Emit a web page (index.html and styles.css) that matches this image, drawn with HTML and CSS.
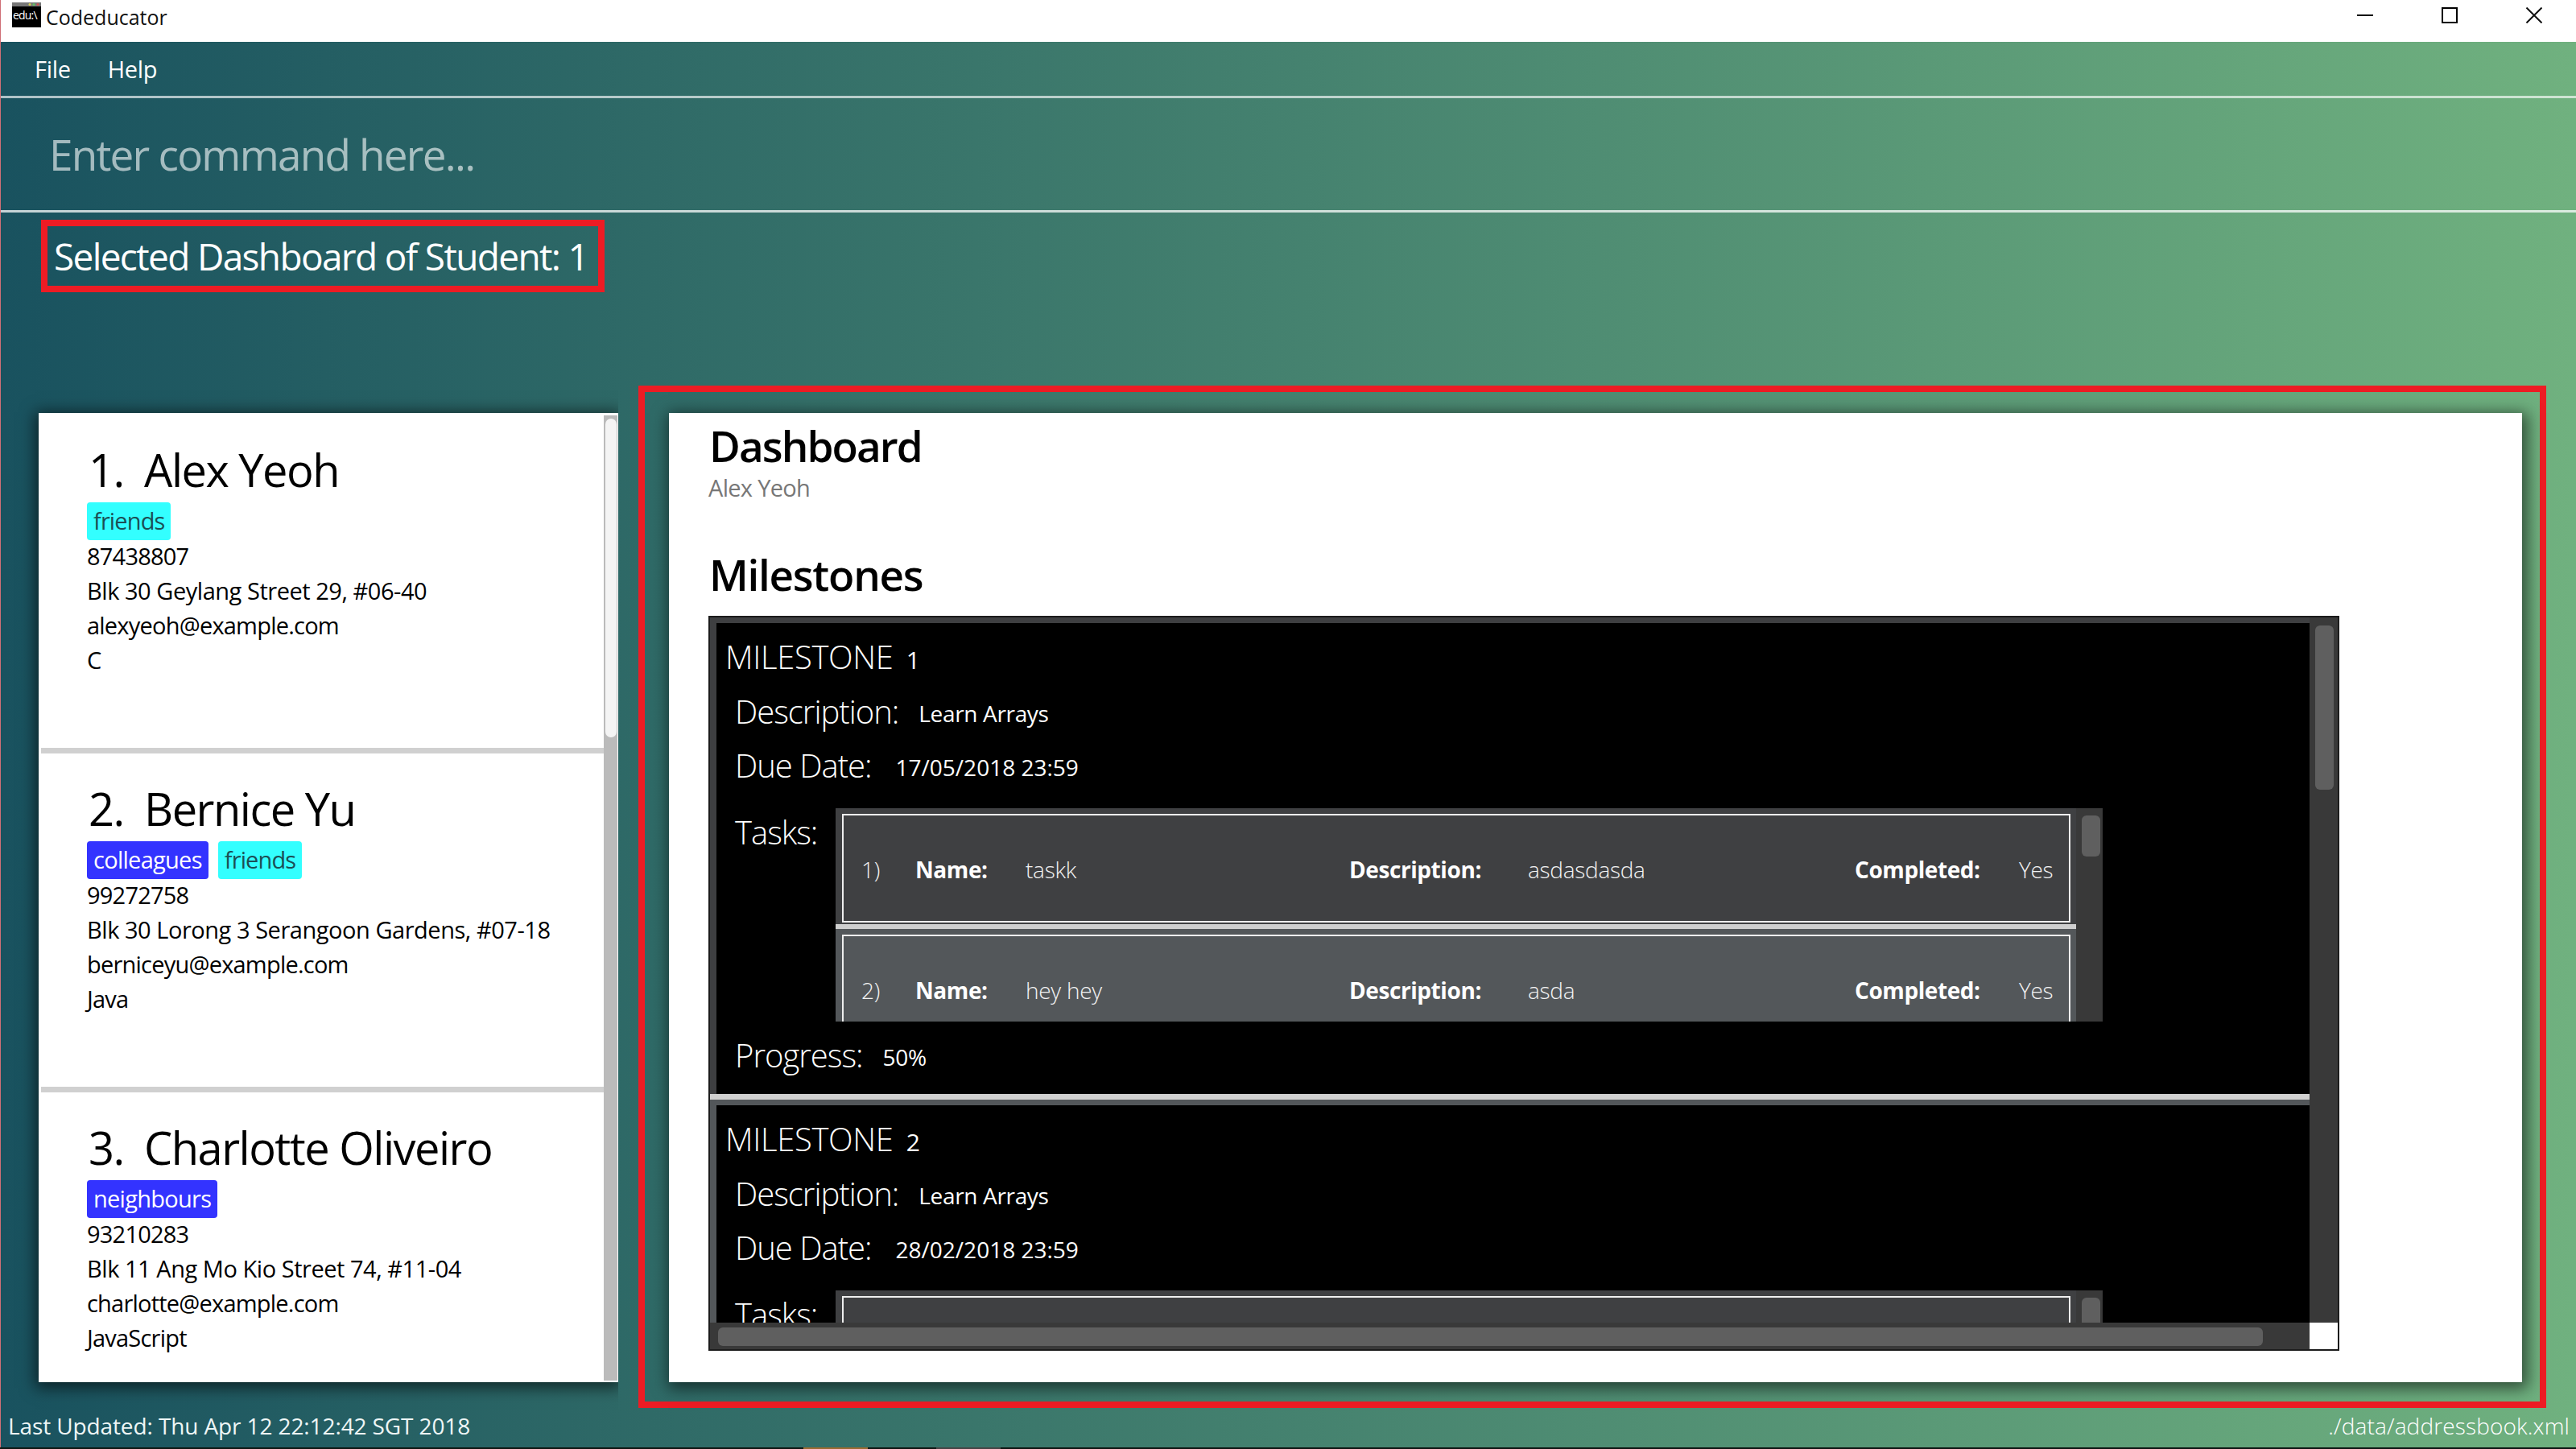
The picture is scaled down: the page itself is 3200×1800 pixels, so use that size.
FILE: index.html
```html
<!DOCTYPE html>
<html lang="en">
<head>
  <meta charset="UTF-8" />
  <title>Codeducator</title>
  <link rel="stylesheet" href="styles.css">
</head>
<body>
<div class="app">
  <div class="titlebar">
    <svg class="app-icon" width="36" height="31" viewBox="0 0 36 31">
      <rect width="36" height="31" fill="#000"/>
      <rect width="36" height="5" fill="#777"/>
      <circle cx="22" cy="2.5" r="1.5" fill="#d8d050"/>
      <circle cx="27" cy="2.5" r="1.5" fill="#60c060"/>
      <circle cx="32" cy="2.5" r="1.5" fill="#d05050"/>
      <text x="1" y="21" fill="#fff" font-family="Open Sans" font-size="14" letter-spacing="-0.8">edu:\</text>
    </svg>
    <span class="app-name">Codeducator</span>
    <div class="win-btns">
      <div class="win-btn"><svg width="20" height="20" viewBox="0 0 20 20"><path d="M0 10H20" stroke="#000" stroke-width="2"/></svg></div>
      <div class="win-btn"><svg width="20" height="20" viewBox="0 0 20 20"><rect x="1" y="1" width="18" height="18" fill="none" stroke="#000" stroke-width="2"/></svg></div>
      <div class="win-btn"><svg width="20" height="20" viewBox="0 0 20 20"><path d="M0.5 0.5L19.5 19.5M19.5 0.5L0.5 19.5" stroke="#111" stroke-width="2"/></svg></div>
    </div>
  </div>

  <div class="menubar"><span>File</span><span>Help</span></div>
  <div class="command">Enter command here...</div>

  <div class="result-area">
    <div class="result-box">Selected Dashboard of Student: 1</div>
  </div>

  <div class="main">
    <div class="person-panel">
      <div class="person-list">
        <div class="person">
          <div class="person-name"><span class="idx">1.</span>Alex Yeoh</div>
          <div class="tags"><span class="tag tag-cyan">friends</span></div>
          <div class="line">87438807</div>
          <div class="line address">Blk 30 Geylang Street 29, #06-40</div>
          <div class="line">alexyeoh@example.com</div>
          <div class="line">C</div>
        </div>
        <div class="person">
          <div class="person-name"><span class="idx">2.</span>Bernice Yu</div>
          <div class="tags"><span class="tag tag-blue">colleagues</span><span class="tag tag-cyan">friends</span></div>
          <div class="line">99272758</div>
          <div class="line address">Blk 30 Lorong 3 Serangoon Gardens, #07-18</div>
          <div class="line">berniceyu@example.com</div>
          <div class="line">Java</div>
        </div>
        <div class="person">
          <div class="person-name"><span class="idx">3.</span>Charlotte Oliveiro</div>
          <div class="tags"><span class="tag tag-blue">neighbours</span></div>
          <div class="line">93210283</div>
          <div class="line address">Blk 11 Ang Mo Kio Street 74, #11-04</div>
          <div class="line">charlotte@example.com</div>
          <div class="line">JavaScript</div>
        </div>
      </div>
      <div class="person-track"><div class="person-thumb"></div></div>
    </div>

    <div class="dash-frame">
      <div class="dash">
        <h1 class="dash-title">Dashboard</h1>
        <div class="dash-student">Alex Yeoh</div>
        <h1 class="dash-sub">Milestones</h1>

        <div class="ms-box">
          <div class="ms-view">
            <div class="ms-cell">
              <div class="ms">
                <div class="ms-title">MILESTONE <small>1</small></div>
                <div class="ms-row ms-desc"><span class="ms-label">Description:</span><span class="ms-value">Learn Arrays</span></div>
                <div class="ms-row ms-due"><span class="ms-label">Due Date:</span><span class="ms-value ms-date">17/05/2018 23:59</span></div>
                <div class="ms-tasks">
                  <div class="ms-label tasks-label">Tasks:</div>
                  <div class="task-list">
                    <div class="task-cells">
                      <div class="task-cell">
                        <div class="task">
                          <span class="t-val">1)</span><b>Name:</b><span class="t-val">taskk</span><b>Description:</b><span class="t-val">asdasdasda</span><b>Completed:</b><span class="t-val">Yes</span>
                        </div>
                      </div>
                      <div class="task-cell even">
                        <div class="task">
                          <span class="t-val">2)</span><b>Name:</b><span class="t-val">hey hey</span><b>Description:</b><span class="t-val">asda</span><b>Completed:</b><span class="t-val">Yes</span>
                        </div>
                      </div>
                    </div>
                    <div class="task-track"><div class="task-thumb"></div></div>
                  </div>
                </div>
                <div class="ms-row ms-progress"><span class="ms-label">Progress:</span><span class="ms-value">50%</span></div>
              </div>
            </div>
            <div class="ms-cell even">
              <div class="ms">
                <div class="ms-title">MILESTONE <small>2</small></div>
                <div class="ms-row ms-desc"><span class="ms-label">Description:</span><span class="ms-value">Learn Arrays</span></div>
                <div class="ms-row ms-due"><span class="ms-label">Due Date:</span><span class="ms-value ms-date">28/02/2018 23:59</span></div>
                <div class="ms-tasks">
                  <div class="ms-label tasks-label">Tasks:</div>
                  <div class="task-list">
                    <div class="task-cells">
                      <div class="task-cell"><div class="task"></div></div>
                    </div>
                    <div class="task-track"><div class="task-thumb"></div></div>
                  </div>
                </div>
              </div>
            </div>
          </div>
          <div class="ms-vtrack"><div class="ms-vthumb"></div></div>
          <div class="ms-htrack"><div class="ms-hthumb"></div></div>
          <div class="ms-corner"></div>
        </div>
      </div>
    </div>
  </div>

  <div class="statusbar">
    <span>Last Updated: Thu Apr 12 22:12:42 SGT 2018</span>
    <span class="save-path">./data/addressbook.xml</span>
  </div>
  <div class="taskbar"><span class="task-a"></span><span class="task-b"></span></div>
</div>
</body>
</html>
```
FILE: styles.css
```css
html, body {
  margin: 0;
  overflow: hidden;
}
body {
  font-family: "Open Sans", "Noto Sans", sans-serif;
  letter-spacing: -0.02em;
}
.app {
  position: relative;
  width: 3200px;
  height: 1800px;
  display: flex;
  flex-direction: column;
  background: linear-gradient(90deg, #19525f, #70b17f);
  color: #fff;
}
.app::before {
  content: "";
  position: absolute;
  left: 0;
  top: 0;
  bottom: 0;
  width: 1px;
  background: #cf6f76;
}

/* title bar */
.titlebar {
  height: 52px;
  flex-shrink: 0;
  background: #fff;
  color: #111;
  display: flex;
  align-items: flex-start;
}
.app-icon {
  margin: 3px 0 0 15px;
}
.app-name {
  margin-left: 6px;
  font-size: 25px;
  line-height: 42px;
  letter-spacing: 0;
}
.win-btns {
  margin-left: auto;
  display: flex;
}
.win-btn {
  width: 105px;
  height: 38px;
  display: flex;
  align-items: center;
  justify-content: center;
}

/* menu + command box */
.menubar {
  height: 67px;
  line-height: 67px;
  padding-left: 43px;
  font-size: 29px;
  display: flex;
  gap: 46px;
  border-bottom: 3px solid rgba(255, 255, 255, 0.65);
}
.command {
  height: 139px;
  line-height: 139px;
  padding-left: 61px;
  font-size: 53px;
  letter-spacing: -0.033em;
  color: rgba(255, 255, 255, 0.6);
  border-bottom: 3px solid rgba(255, 255, 255, 0.75);
}
.result-area {
  height: 215px;
  padding: 9px 0 0 51px;
  box-sizing: border-box;
}
.result-box {
  width: 700px;
  height: 90px;
  box-sizing: border-box;
  border: 8px solid #ed1c24;
  padding-left: 8px;
  line-height: 74px;
  font-size: 46px;
  letter-spacing: -0.036em;
  white-space: nowrap;
}

/* main row */
.main {
  height: 1270px;
  flex-shrink: 0;
  display: flex;
  align-items: flex-start;
  padding-left: 48px;
}
.person-panel {
  width: 720px;
  height: 1204px;
  margin-top: 34px;
  box-sizing: border-box;
  padding: 2px 1px 2px 3px;
  background: #fff;
  color: #000;
  display: flex;
  box-shadow: 0 3px 18px 4px rgba(0, 0, 0, 0.6);
  clip-path: inset(-40px 0 -40px -40px);
}
.person-list {
  flex: 1;
  overflow: hidden;
}
.person {
  height: 414px;
  box-sizing: border-box;
  padding: 36px 0 0 57px;
  margin-bottom: 7px;
  box-shadow: 0 7px 0 #d0d0d0;
}
.person-name {
  font-size: 56px;
  line-height: 64px;
  margin-left: -1px;
  letter-spacing: -0.027em;
}
.idx {
  display: inline-block;
  width: 72px;
  padding-left: 3px;
  box-sizing: border-box;
}
.tags {
  display: flex;
  gap: 12px;
  margin: 9px 0 -2px;
}
.tag {
  height: 47px;
  line-height: 45px;
  padding: 0 8px;
  border-radius: 4px;
  font-size: 29px;
  letter-spacing: -0.03em;
}
.tag-cyan {
  background: #33ffff;
  color: #1c4f55;
}
.tag-blue {
  background: #3333ff;
  color: #fff;
  letter-spacing: -0.025em;
}
.line {
  font-size: 29px;
  line-height: 43px;
  letter-spacing: -0.027em;
}
.line.address {
  letter-spacing: -0.016em;
}
.person-track {
  width: 17px;
  margin-top: 1px;
  box-sizing: border-box;
  padding: 4px 1px 0 2px;
  background: #bbb;
}
.person-thumb {
  height: 396px;
  background: #f4f4f4;
  border-radius: 7px;
}

/* dashboard */
.dash-frame {
  width: 2370px;
  height: 1270px;
  box-sizing: border-box;
  margin-left: 25px;
  border: 8px solid #ed1c24;
  padding: 26px 22px 24px 30px;
}
.dash {
  height: 1204px;
  box-sizing: border-box;
  padding: 10px 0 0 49px;
  background: #fff;
  color: #000;
  box-shadow: 3px 4px 18px 4px rgba(0, 0, 0, 0.55);
}
.dash-title, .dash-sub {
  margin: 0 0 0 1px;
  font-size: 53px;
  line-height: 61px;
  font-weight: 600;
  letter-spacing: -0.036em;
}
.dash-student {
  margin-top: 2px;
  font-size: 29px;
  line-height: 40px;
  letter-spacing: -0.024em;
  color: #777;
}
.dash-sub {
  margin-top: 57px;
  letter-spacing: -0.024em;
}

.ms-box {
  width: 2026px;
  height: 913px;
  box-sizing: border-box;
  margin-top: 21px;
  border: 2px solid #1c1c1c;
  background: #393939;
  color: #fff;
  display: grid;
  grid-template-columns: 1fr 35px;
  grid-template-rows: 1fr 33px;
}
.ms-view {
  overflow: hidden;
  min-height: 0;
}
.ms-cell {
  padding: 7px 0 0 8px;
  background: #3e3f41;
  height: 592px;
  box-sizing: border-box;
  margin-bottom: 7px;
  box-shadow: 0 7px 0 #d0d0d0;
}
.ms-cell.even {
  background: #53575a;
  height: 640px;
  box-shadow: none;
}
.ms {
  height: 100%;
  box-sizing: border-box;
  padding: 17px 0 0 9px;
  background: #000;
}
.ms-title {
  margin-left: 2px;
  font-size: 40px;
  line-height: 50px;
  font-weight: 300;
}
.ms-title small {
  font-size: 30px;
  line-height: 1;
  margin-left: 6px;
  font-weight: 400;
}
.ms-row {
  display: flex;
  align-items: flex-start;
  padding-left: 14px;
}
.ms-label {
  font-size: 40px;
  line-height: 50px;
  font-weight: 300;
  letter-spacing: -0.025em;
}
.ms-value {
  margin: 4px 0 0 25px;
  font-size: 28px;
  line-height: 46px;
  letter-spacing: -0.012em;
}
.ms-value.ms-date {
  margin-left: 30px;
  letter-spacing: 0;
}
.ms-desc { margin-top: 18px; }
.ms-due { margin-top: 17px; }
.ms-progress { margin-top: 17px; }
.ms-tasks {
  display: flex;
  margin-top: 28px;
}
.tasks-label {
  width: 139px;
  padding: 5px 0 0 14px;
  box-sizing: border-box;
}
.task-list {
  width: 1574px;
  height: 265px;
  overflow: hidden;
  display: flex;
  background: #393939;
}
.task-cells {
  flex: 1;
}
.task-cell {
  height: 144px;
  box-sizing: border-box;
  padding: 7px 7px 2px 8px;
  background: #3f4042;
  margin-bottom: 6px;
  box-shadow: 0 6px 0 #cfcfcf;
}
.task-cell.even {
  background: #53575a;
  box-shadow: none;
}
.task {
  height: 135px;
  box-sizing: border-box;
  border: 2px solid #eee;
  padding: 3px 0 0 22px;
  display: grid;
  grid-template-columns: 67px 137px 402px 222px 406px 204px auto;
  align-items: center;
  font-size: 28px;
}
.task b {
  font-weight: 700;
  font-size: 28px;
  letter-spacing: -0.015em;
}
.t-val {
  color: #f2f2f2;
  font-weight: 300;
  letter-spacing: -0.01em;
}
.task-track {
  width: 33px;
  box-sizing: border-box;
  padding: 9px 3px 0 7px;
}
.task-thumb {
  height: 51px;
  background: #5f5f5f;
  border-radius: 6px;
}
.ms-vtrack {
  padding: 10px 5px 0 7px;
}
.ms-vthumb {
  height: 204px;
  background: #5f5f5f;
  border-radius: 6px;
}
.ms-htrack {
  padding: 6px 58px 4px 10px;
}
.ms-hthumb {
  height: 23px;
  background: #5f5f5f;
  border-radius: 6px;
}
.ms-corner {
  background: #fff;
}

/* status bar */
.statusbar {
  height: 49px;
  line-height: 45px;
  padding: 0 8px 0 10px;
  font-size: 28px;
  letter-spacing: -0.004em;
  display: flex;
  justify-content: space-between;
  color: #eef6f6;
}
.save-path {
  font-weight: 300;
  letter-spacing: 0.005em;
  color: #fff;
}
.taskbar {
  height: 2px;
  background: #0c1612;
  position: relative;
}
.task-a, .task-b {
  position: absolute;
  top: 0;
  height: 2px;
  width: 80px;
}
.task-a {
  left: 998px;
  background: #9a6a30;
}
.task-b {
  left: 1163px;
  background: #444;
}
```
